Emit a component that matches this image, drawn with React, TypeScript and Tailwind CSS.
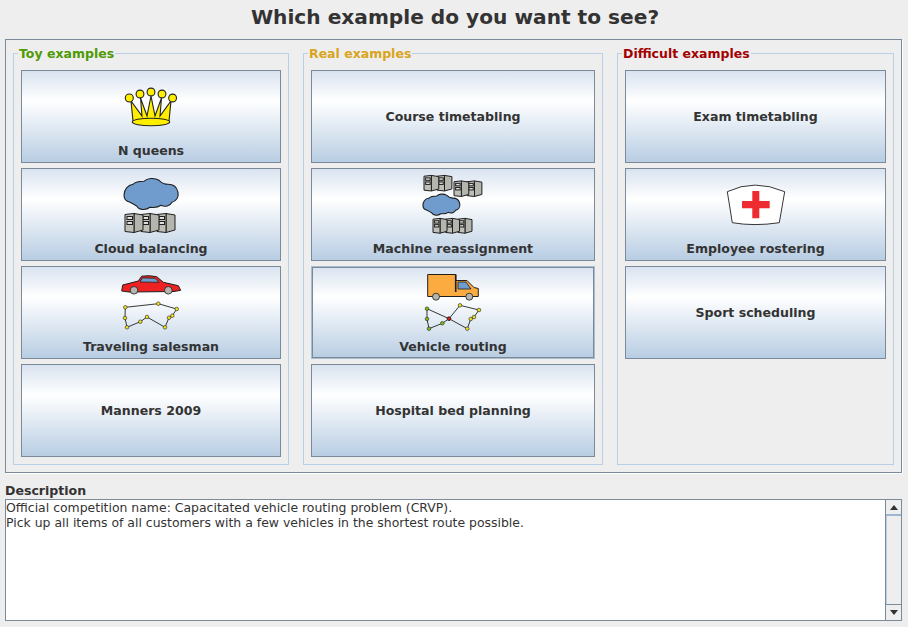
import type { ReactNode } from "react";

const font = "font-['DejaVu_Sans',sans-serif]";

function Towers({ x, y, n, s = 1 }: { x: number; y: number; n: number; s?: number }) {
  const items = Array.from({ length: n }, (_, i) => n - 1 - i);
  return (
    <g transform={`translate(${x} ${y}) scale(${s})`} stroke="#1f1f1f" strokeWidth={1 / s}>
      {items.map((i) => (
        <g key={i} transform={`translate(${i * 16} 0)`}>
          <polygon points="9,0.5 18,2 18,17 9,19.5" fill="#b4b5ad" />
          <polygon points="0,1.5 9,0.5 9,19.5 0,18.5" fill="#bebfb7" />
          <rect x="2" y="3.5" width="5.5" height="3" fill="#dededa" />
          <rect x="2" y="8.5" width="5.5" height="3" fill="#dededa" />
        </g>
      ))}
    </g>
  );
}

function Cloud({ x, y, s = 1 }: { x: number; y: number; s?: number }) {
  return (
    <path
      transform={`translate(${x} ${y}) scale(${s})`}
      d="M0 17C0 11 4 7 9 6C12 3 17 3 20 3C23 0 30-1 35 2C38 5 42 6 44 6C49 6 53 9 54 14C55 19 52 23 48 24C46 28 41 29 37 27C33 30 28 29 26 29C22 32 15 32 13 28C10 26 8 25 6 24C2 23 0 21 0 17Z"
      fill="#6f9ccc"
      stroke="#1f1f1f"
      strokeWidth={1.1 / s}
    />
  );
}

function Route({ points, color }: { points: number[][]; color: string | string[] }) {
  return (
    <g>
      <polygon
        points={points.map((p) => p.join(",")).join(" ")}
        fill="none"
        stroke="#222222"
        strokeWidth="0.9"
      />
      {points.map((p, i) => (
        <circle
          key={i}
          cx={p[0]}
          cy={p[1]}
          r="1.8"
          fill={Array.isArray(color) ? color[i] : color}
          stroke="#222222"
          strokeWidth="0.6"
        />
      ))}
    </g>
  );
}

function Wrap({ children }: { children: ReactNode }) {
  return (
    <svg width="64" height="64" viewBox="0 0 64 64" className="block shrink-0">
      {children}
    </svg>
  );
}

const CrownIcon = () => (
  <Wrap>
    <g stroke="#222222" strokeWidth="1.1" fill="#ffee00">
      <polygon points="14,45 12,25 23,40 21.5,22 28,40 32,20 36,40 42.5,22 41,40 52,25 50,45" />
      <ellipse cx="32" cy="46" rx="18.7" ry="3.8" />
      <circle cx="10.3" cy="22" r="4" />
      <circle cx="21" cy="18" r="3.9" />
      <circle cx="32" cy="16" r="3.9" />
      <circle cx="43" cy="18" r="3.9" />
      <circle cx="53.6" cy="22" r="3.9" />
    </g>
  </Wrap>
);

const CloudIcon = () => (
  <Wrap>
    <Cloud x={5} y={4.3} />
    <Towers x={6} y={39} n={3} />
  </Wrap>
);

const SalesmanIcon = () => (
  <Wrap>
    <path
      d="M2.7 19L3.7 13L19.3 9L22.7 4.2Q30 3 37.7 4.7L44.3 10.3L59.3 13.7L61.7 18.3L55 19.5L10 20Z"
      fill="#ee2222"
      stroke="#1f1f1f"
      strokeWidth="1"
    />
    <polygon points="21,10 23.3,5.9 36,6.3 40,10.3" fill="#6f9ccc" stroke="#1f1f1f" strokeWidth="0.8" />
    <circle cx="15" cy="18.3" r="3.8" fill="#b4b5ad" stroke="#1f1f1f" strokeWidth="0.8" />
    <circle cx="49.3" cy="18.3" r="3.8" fill="#b4b5ad" stroke="#1f1f1f" strokeWidth="0.8" />
    <Route
      color="#f0e020"
      points={[
        [6.3, 35.3],
        [39.3, 31.7],
        [57.7, 37],
        [53.3, 43.7],
        [50, 45.7],
        [46, 55.3],
        [28, 45],
        [21.3, 49.7],
        [8, 55.3],
        [6, 46],
      ]}
    />
  </Wrap>
);

const MachineIcon = () => (
  <Wrap>
    <Towers x={3} y={1} n={2} s={0.82} />
    <Towers x={33} y={6.5} n={2} s={0.82} />
    <Cloud x={2} y={20} s={0.68} />
    <Towers x={12} y={44} n={3} s={0.78} />
  </Wrap>
);

const VehicleIcon = () => {
  const green = "#7ac010";
  const yellow = "#f0e020";
  const red = "#d01818";
  return (
    <Wrap>
      <path
        d="M6.7 2.5H34.7V8.5H46L53 15.5L57.3 16.5V24.5H6.7Z"
        fill="#fcab40"
        stroke="#1f1f1f"
        strokeWidth="1"
      />
      <path d="M34.7 2.5V20" stroke="#1f1f1f" strokeWidth="1.6" />
      <polygon points="37,10 45,10 50,17 37,17" fill="#6f9ccc" stroke="#1f1f1f" strokeWidth="0.8" />
      <circle cx="15" cy="24.7" r="3.5" fill="#b4b5ad" stroke="#1f1f1f" strokeWidth="0.8" />
      <circle cx="48.3" cy="24.7" r="3.5" fill="#b4b5ad" stroke="#1f1f1f" strokeWidth="0.8" />
      <Route
        color={[red, green, green, green, green, red, yellow, yellow, yellow, yellow, yellow]}
        points={[
          [28, 46.7],
          [6, 36.7],
          [6, 47],
          [8, 56.7],
          [21.3, 51.3],
          [28, 46.7],
          [39, 33.3],
          [58, 38],
          [53, 45],
          [49.7, 47],
          [46.3, 56.7],
        ]}
      />
    </Wrap>
  );
};

const NurseIcon = () => (
  <Wrap>
    <path
      d="M3.3 17.7Q30.3 4.5 60.7 17.7L55.3 48.7Q30.3 52.5 8.3 48.7Z"
      fill="#ffffff"
      stroke="#1f1f1f"
      strokeWidth="0.9"
    />
    <path d="M28.3 17H35.3V27H45.7V34.3H35.3V44.3H28.3V34.3H18V27H28.3Z" fill="#ee2b30" />
  </Wrap>
);

type Example = { title: string; icon?: ReactNode; focused?: boolean };

const groups: { title: string; color: string; width: string; examples: Example[] }[] = [
  {
    title: "Toy examples",
    color: "text-[#4e9a06]",
    width: "w-[276px]",
    examples: [
      { title: "N queens", icon: <CrownIcon /> },
      { title: "Cloud balancing", icon: <CloudIcon /> },
      { title: "Traveling salesman", icon: <SalesmanIcon /> },
      { title: "Manners 2009" },
    ],
  },
  {
    title: "Real examples",
    color: "text-[#d9a520]",
    width: "w-[300px]",
    examples: [
      { title: "Course timetabling" },
      { title: "Machine reassignment", icon: <MachineIcon /> },
      { title: "Vehicle routing", icon: <VehicleIcon />, focused: true },
      { title: "Hospital bed planning" },
    ],
  },
  {
    title: "Difficult examples",
    color: "text-[#a40000]",
    width: "w-[277px]",
    examples: [
      { title: "Exam timetabling" },
      { title: "Employee rostering", icon: <NurseIcon /> },
      { title: "Sport scheduling" },
    ],
  },
];

function ExampleButton({ title, icon, focused }: Example) {
  return (
    <button
      type="button"
      className={`flex h-[93px] w-full flex-col items-center border bg-[linear-gradient(#d9e3f0,#ffffff_33%,#b8cde3)] text-[12.55px] font-bold leading-4 text-[#333333] ${
        icon ? "pt-[5px]" : "justify-center"
      } ${focused ? "border-[#a9bdd2] shadow-[inset_0_0_0_1px_#7a8a99]" : "border-[#7a8a99]"}`}
    >
      {icon}
      <span className={icon ? "mt-[3px]" : ""}>{title}</span>
    </button>
  );
}

function ScrollArrow({ up }: { up?: boolean }) {
  return (
    <svg width="8" height="5" viewBox="0 0 8 5" className="block">
      <polygon points={up ? "4,0 8,5 0,5" : "0,0 8,0 4,5"} fill="#333333" />
    </svg>
  );
}

export default function App() {
  return (
    <div className={`h-[627px] w-[908px] overflow-hidden bg-[#eeeeee] text-[#333333] ${font}`}>
      <h1 className="h-[39px] pl-[2px] text-center text-[20.15px] font-bold leading-[35px]">
        Which example do you want to see?
      </h1>

      <div className="mx-[5px] flex h-[434px] w-[897px] gap-[14px] border border-[#7a8a99] px-[7px] pb-[7px] pt-[6px] shadow-[1px_1px_0_#ffffff]">
        {groups.map((group) => (
          <fieldset key={group.title} className={`${group.width} shrink-0 border border-[#b8cfe5] px-[7px] pb-[6px]`}>
            <legend className={`-ml-[3px] h-[14px] px-px text-[12.5px] font-bold leading-4 ${group.color}`}>
              {group.title}
            </legend>
            <div className="mt-[10px] flex flex-col gap-[5px]">
              {group.examples.map((example) => (
                <ExampleButton key={example.title} {...example} />
              ))}
            </div>
          </fieldset>
        ))}
      </div>

      <div className="mx-[5px] mt-[10px] text-[12.55px] font-bold leading-4">Description</div>
      <div className="mx-[5px] flex h-[122px] w-[897px] border border-[#7a8a99] bg-white">
        <p className="min-w-0 flex-1 text-[12.45px] leading-[15px]">
          Official competition name: Capacitated vehicle routing problem (CRVP).
          <br />
          Pick up all items of all customers with a few vehicles in the shortest route possible.
        </p>
        <div className="flex w-[16px] shrink-0 flex-col border-l border-[#7a8a99] bg-[#eeeeee]">
          <div className="flex h-[16px] items-center justify-center border-b-2 border-[#9fb6cf]">
            <ScrollArrow up />
          </div>
          <div className="flex-1 border-l border-[#b8cfe5]" />
          <div className="flex h-[16px] items-center justify-center border-t border-[#7a8a99]">
            <ScrollArrow />
          </div>
        </div>
      </div>
    </div>
  );
}
